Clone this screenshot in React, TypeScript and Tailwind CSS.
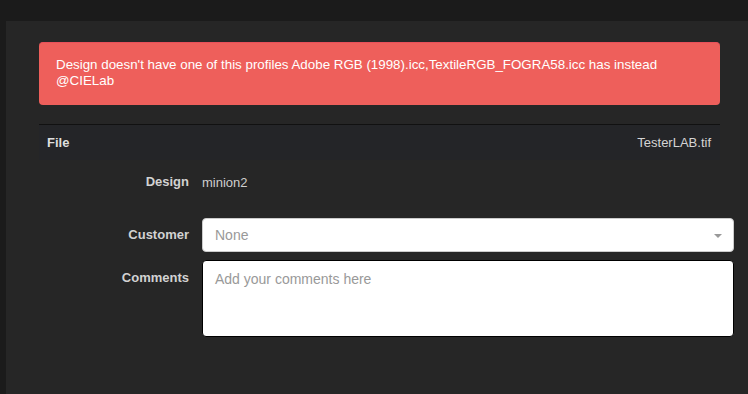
import React from "react";

const font = { fontFamily: '"Liberation Sans", Arial, sans-serif' };

interface FormRowProps {
  label: string;
  top?: boolean;
  className?: string;
  children: React.ReactNode;
}

const FormRow: React.FC<FormRowProps> = ({ label, top, className, children }) => (
  <div className={`flex ${top ? "items-start" : "items-center"} ${className ?? ""}`}>
    <label
      className={`w-[150px] shrink-0 text-right text-[13px] font-bold text-[#d2d2d2] ${
        top ? "pt-[8px]" : ""
      }`}
    >
      {label}
    </label>
    <div className="ml-[13px] w-[532px]">{children}</div>
  </div>
);

export default function App() {
  return (
    <div className="h-[394px] w-[748px] bg-[#1b1b1b] overflow-hidden" style={font}>
      <div className="h-[21px]" />
      <div className="ml-[6px] h-[373px] bg-[#262626] pl-[33px] pt-[21px]">
        <div className="w-[681px] rounded-[4px] border-t border-[#e9505a] bg-[#ee5f5b] pb-[16px] pl-[17px] pr-[35px] pt-[14px] text-[13.35px] leading-[16px] text-white">
          Design doesn't have one of this profiles Adobe RGB (1998).icc,TextileRGB_FOGRA58.icc
          has instead @CIELab
        </div>

        <div className="mt-[19px] w-[681px] border-t border-[#111111]">
          <div className="flex h-[35px] items-center justify-between bg-[#242528] pl-[8px] pr-[9px] text-[13px]">
            <span className="font-bold text-[#dedede]">File</span>
            <span className="text-[#d4d4d4]">TesterLAB.tif</span>
          </div>
        </div>

        <FormRow label="Design" className="mt-[5px] h-[34px]">
          <span className="text-[13px] text-[#cfcfcf]">minion2</span>
        </FormRow>

        <FormRow label="Customer" className="mt-[19px]">
          <div className="relative flex h-[34px] items-center rounded-[4px] border border-[#cccccc] bg-white px-[12px]">
            <span className="text-[14px] text-[#999999]">None</span>
            <svg
              className="absolute right-[11px] top-[15px]"
              width="8"
              height="4"
              viewBox="0 0 8 4"
            >
              <path d="M0 0 L8 0 L4 4 Z" fill="#999999" />
            </svg>
          </div>
        </FormRow>

        <FormRow label="Comments" top className="mt-[8px]">
          <textarea
            placeholder="Add your comments here"
            className="block h-[77px] w-full resize-none rounded-[4px] border border-black bg-white px-[12px] pb-[6px] pt-[8px] text-[14px] text-[#333333] outline-none placeholder:text-[#999999]"
            style={font}
          />
        </FormRow>
      </div>
    </div>
  );
}
